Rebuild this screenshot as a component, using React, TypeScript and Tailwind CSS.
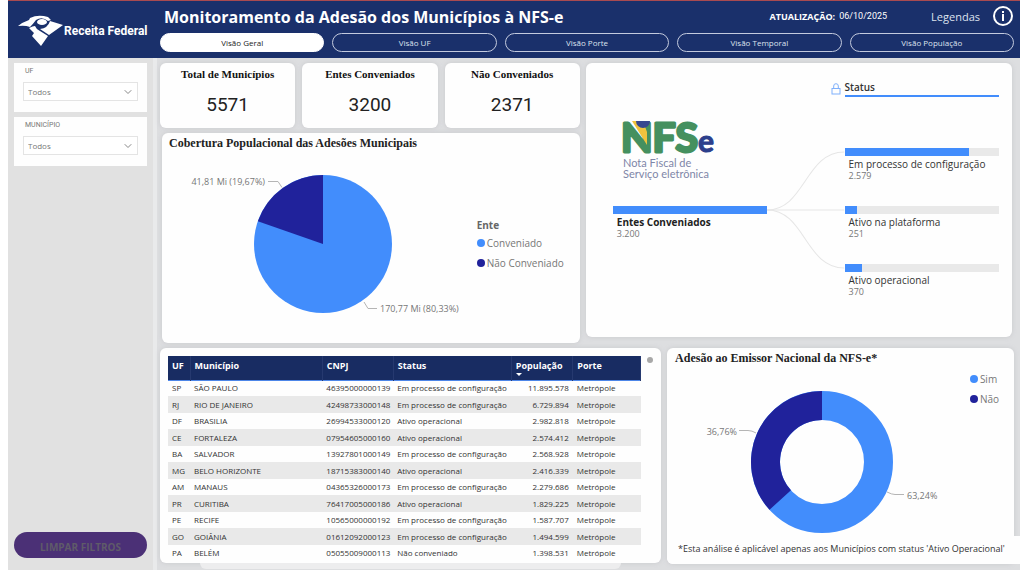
import { ChevronDown } from "lucide-react";

const TABS = ["Visão Geral", "Visão UF", "Visão Porte", "Visão Temporal", "Visão População"];

const KPIS = [
  { label: "Total de Municípios", value: "5571" },
  { label: "Entes Conveniados", value: "3200" },
  { label: "Não Conveniados", value: "2371" },
];

const TOTAL = 3200;

const STATUSES = [
  { label: "Em processo de configuração", value: 2579, text: "2.579" },
  { label: "Ativo na plataforma", value: 251, text: "251" },
  { label: "Ativo operacional", value: 370, text: "370" },
];

const CONFIG = "Em processo de configuração";
const ATIVO = "Ativo operacional";

const ROWS = [
  ["SP", "SÃO PAULO", "46395000000139", CONFIG, "11.895.578", "Metrópole"],
  ["RJ", "RIO DE JANEIRO", "42498733000148", CONFIG, "6.729.894", "Metrópole"],
  ["DF", "BRASILIA", "26994533000120", ATIVO, "2.982.818", "Metrópole"],
  ["CE", "FORTALEZA", "07954605000160", ATIVO, "2.574.412", "Metrópole"],
  ["BA", "SALVADOR", "13927801000149", CONFIG, "2.568.928", "Metrópole"],
  ["MG", "BELO HORIZONTE", "18715383000140", ATIVO, "2.416.339", "Metrópole"],
  ["AM", "MANAUS", "04365326000173", CONFIG, "2.279.686", "Metrópole"],
  ["PR", "CURITIBA", "76417005000186", ATIVO, "1.829.225", "Metrópole"],
  ["PE", "RECIFE", "10565000000192", CONFIG, "1.587.707", "Metrópole"],
  ["GO", "GOIÂNIA", "01612092000123", CONFIG, "1.494.599", "Metrópole"],
  ["PA", "BELÉM", "05055009000113", "Não conveniado", "1.398.531", "Metrópole"],
];

const COLUMNS = [
  { label: "UF", width: "w-[22px]" },
  { label: "Município", width: "w-[28%]" },
  { label: "CNPJ", width: "w-[15%]" },
  { label: "Status", width: "w-[25%]" },
  { label: "População", width: "w-[13%]" },
  { label: "Porte", width: "" },
];

const CARD = "bg-[#fefefe] rounded-md shadow-[0_0_5px_#c9cacd]";
const SERIF = "font-['Liberation_Serif',serif] font-bold";

// Point on a circle, with the fraction measured clockwise from the top
function point(cx: number, cy: number, r: number, fraction: number) {
  const angle = fraction * 2 * Math.PI;
  return `${cx + r * Math.sin(angle)} ${cy - r * Math.cos(angle)}`;
}

function ReceitaLogo() {
  return (
    <svg viewBox="0 0 134 34" className="h-[34px] w-[134px] shrink-0" role="img" aria-label="Receita Federal">
      <g fill="#fff">
        <path d="M0 13 Q5 9 11 7 L12 5 Q20 1 30 4 L33 7 L30 8 Q24 3 18 7 Q15 11 12 14 Q7 12 0 13Z" />
        <path d="M11 15 Q15 13 17 13 Q18 16 22 18 L30 23 L23 33 L14 23 L16 20Z" />
        <path d="M32 8 L45 12 L31 22 L22 16 Q30 15 32 8Z" />
        <ellipse cx="24" cy="9" rx="5" ry="3" />
      </g>
      <text x="46" y="22" fill="#fff" fontSize="12" className="font-[Roboto,sans-serif] font-bold">
        Receita Federal
      </text>
    </svg>
  );
}

function NfseLogo() {
  return (
    <svg viewBox="0 0 94 66" className="h-[66px] w-[94px] overflow-visible" role="img" aria-label="NFSe">
      <text
        x="-2"
        y="34"
        fontSize="41"
        fill="#45905f"
        stroke="#45905f"
        strokeWidth="3"
        strokeLinejoin="round"
        className="font-[Lato,sans-serif] font-bold"
      >
        NFS
        <tspan fontSize="30" fill="#2c3f8c" stroke="#2c3f8c" strokeWidth="1">e</tspan>
      </text>
      <path d="M9 3 H20 L24 14 V27 Z" fill="#efc33e" />
      <path d="M13 3 H27 A7 7 0 0 1 13 3Z" fill="#38478f" />
      <g fill="#7f86a8" fontSize="11" className="font-[Lato,sans-serif]">
        <text x="0" y="49">Nota Fiscal de</text>
        <text x="0" y="60">Serviço eletrônica</text>
      </g>
    </svg>
  );
}

function Filter({ id, label }: { id: string; label: string }) {
  return (
    <div className="flex h-[49px] flex-col bg-[#fefefe] px-[9px] pt-[3px]">
      <label htmlFor={id} className="ml-0.5 font-[Roboto,sans-serif] text-[7px] leading-[11px] text-[#777]">
        {label}
      </label>
      <div className="relative mt-[5px]">
        <select
          id={id}
          className="block h-[19px] w-full appearance-none border border-[#e4e4e4] bg-white px-1 text-[8px] text-[#777]"
        >
          <option>Todos</option>
        </select>
        <ChevronDown className="pointer-events-none absolute top-1 right-1 h-3 w-3 text-[#888]" strokeWidth={2} />
      </div>
    </div>
  );
}

function LegendItem({ color, label }: { color: string; label: string }) {
  return (
    <li className="flex h-5 items-center gap-[2px]">
      <span className={`h-2 w-2 rounded-full ${color}`} />
      {label}
    </li>
  );
}

function Header() {
  return (
    <header className="flex h-[58px] border-t border-[#a94a50] bg-[#1a306b]">
      <div className="flex w-[152px] shrink-0 items-center pl-2.5">
        <ReceitaLogo />
      </div>
      <div className="flex-1 pr-1.5">
        <div className="flex h-8 items-center justify-between pl-1 text-white">
          <h1 className="text-[16px] leading-8 font-bold">Monitoramento da Adesão dos Municípios à NFS-e</h1>
          <div className="flex items-center">
            <span className="text-[9px] font-bold">ATUALIZAÇÃO:</span>
            <span className="ml-1 font-[Roboto,sans-serif] text-[9px]">06/10/2025</span>
            <button type="button" className="ml-11 flex items-center gap-3 text-[11px] text-[#dde2ee]">
              Legendas
              <svg viewBox="0 0 22 22" className="h-[22px] w-[22px]" aria-hidden="true">
                <circle cx="11" cy="10" r="9" fill="none" stroke="#fff" strokeWidth="2" />
                <path d="M10 5h2v2h-2zM10 8h2v7h-2z" fill="#fff" />
              </svg>
            </button>
          </div>
        </div>
        <nav className="grid grid-cols-5 gap-2">
          {TABS.map((tab, index) => (
            <button
              key={tab}
              type="button"
              className={
                index === 0
                  ? "h-[19px] rounded-full border border-white bg-white text-[8px] text-[#222]"
                  : "h-[19px] rounded-full border border-[#c3cade] text-[8px] text-[#dde2ee]"
              }
            >
              {tab}
            </button>
          ))}
        </nav>
      </div>
    </header>
  );
}

function Coverage() {
  const split = point(161, 84, 69, 0.8033);

  return (
    <section className={`ml-0.5 h-[210px] ${CARD}`}>
      <h2 className={`pt-0.5 pl-[7px] text-[12px] leading-4 text-[#222] ${SERIF}`}>
        Cobertura Populacional das Adesões Municipais
      </h2>
      <div className="flex justify-between pt-[9px] pr-4">
        <svg viewBox="0 0 306 176" className="h-44 w-[306px]">
          <circle cx="161" cy="84" r="69" fill="#428dfc" />
          <path d={`M161 84 L161 15 A69 69 0 0 0 ${split} Z`} fill="#20229b" />
          <g fill="none" stroke="#b5b5b5">
            <path d="M106 21.5 h10 l4 6" />
            <path d="M202 142 l4 6.5 h9" />
          </g>
          <g fill="#777" fontSize="9">
            <text x="103" y="25" textAnchor="end">41,81 Mi (19,67%)</text>
            <text x="218" y="152">170,77 Mi (80,33%)</text>
          </g>
        </svg>
        <div className="pt-[58px] text-[10px] text-[#777]">
          <h3 className="font-bold text-[#666]">Ente</h3>
          <ul>
            <LegendItem color="bg-[#428dfc]" label="Conveniado" />
            <LegendItem color="bg-[#20229b]" label="Não Conveniado" />
          </ul>
        </div>
      </div>
    </section>
  );
}

function StatusTree() {
  return (
    <section className={`mr-0.5 h-[274px] pt-[17px] pr-[13px] pl-[27px] ${CARD}`}>
      <div className="grid grid-cols-[2fr_1fr_2fr]">
        <div />
        <div className="flex items-center justify-end pr-1">
          <svg viewBox="0 0 10 12" className="h-3 w-2.5" fill="none" stroke="#7fb0fb" aria-hidden="true">
            <rect x="1" y="5.5" width="8" height="5.5" />
            <path d="M2.7 5.5V3a2.3 2.3 0 0 1 4.6 0v2.5" />
          </svg>
        </div>
        <h2 className="border-b-2 border-[#428dfc] text-[10px] leading-[15px] font-semibold text-[#333]">Status</h2>
      </div>
      <div className="grid grid-cols-[2fr_1fr_2fr]">
        <div className="pt-[21px]">
          <div className="pl-2.5">
            <NfseLogo />
          </div>
          <div className="mt-[22px] h-2 bg-[#428dfc]" />
          <p className="mt-0.5 pl-1 text-[10px] leading-[13px] font-bold text-[#222]">Entes Conveniados</p>
          <p className="pl-1 text-[9px] leading-[9px] text-[#777]">3.200</p>
        </div>
        <svg viewBox="0 0 77 180" preserveAspectRatio="none" className="mt-[50px] h-[180px] w-full" aria-hidden="true">
          <g fill="none" stroke="#e6e6e6">
            <path d="M0 63 C38 63 38 5 77 5" />
            <path d="M0 63 H77" />
            <path d="M0 63 C38 63 38 121 77 121" />
          </g>
        </svg>
        <ul className="pt-[51px]">
          {STATUSES.map((status) => (
            <li key={status.label} className="h-[58px]">
              <div className="h-2 bg-[#e9e9e9]">
                <div className="h-2 bg-[#428dfc]" style={{ width: `${(status.value / TOTAL) * 100}%` }} />
              </div>
              <p className="mt-0.5 pl-1 text-[10px] leading-[13px] whitespace-nowrap text-[#333]">{status.label}</p>
              <p className="pl-1 text-[9px] leading-[9px] text-[#777]">{status.text}</p>
            </li>
          ))}
        </ul>
      </div>
    </section>
  );
}

function CityTable() {
  return (
    <div>
      <section className={`flex h-[215px] gap-1.5 py-2 pr-2 pl-2 ${CARD}`}>
        <div className="h-[201px] flex-1 overflow-hidden">
          <table className="w-full table-fixed text-left text-[8px] whitespace-nowrap text-[#333]">
            <thead>
              <tr className="h-6 border-b border-[#4d86e8] bg-[#182c62] text-[9px] text-white">
                {COLUMNS.map((column) => (
                  <th key={column.label} className={`relative border-r border-[#26396f] px-1 pb-1 font-bold ${column.width}`}>
                    {column.label}
                    {column.label === "População" && (
                      <span className="absolute bottom-1 left-1 border-x-[3px] border-t-[3px] border-x-transparent border-t-white" />
                    )}
                  </th>
                ))}
              </tr>
            </thead>
            <tbody>
              {ROWS.map((row) => (
                <tr key={row[0]} className="h-4 even:h-[17px] even:bg-[#e9e9e9]">
                  {row.map((cell, index) => (
                    <td key={index} className={index === 4 ? "px-1 text-right" : "px-1"}>
                      {cell}
                    </td>
                  ))}
                </tr>
              ))}
            </tbody>
          </table>
        </div>
        <span className="mt-px h-1.5 w-1.5 rounded-full bg-[#a8a8a8]" />
      </section>
      <div className="mr-10 ml-10 h-1.5 rounded-b-xl bg-[#ededee]" />
    </div>
  );
}

function Emitter() {
  const outer = point(155, 96, 71, 0.6324);
  const inner = point(155, 96, 42, 0.6324);

  return (
    <section className={`flex h-[216px] flex-col ${CARD}`}>
      <h2 className={`pt-0.5 pl-2 text-[12px] leading-4 text-[#222] ${SERIF}`}>Adesão ao Emissor Nacional da NFS-e*</h2>
      <div className="flex flex-1 justify-between pr-[15px]">
        <svg viewBox="0 0 290 170" className="h-[170px] w-[290px]">
          <circle cx="155" cy="96" r="56.5" fill="none" stroke="#428dfc" strokeWidth="29" />
          <path d={`M155 25 A71 71 0 0 0 ${outer} L${inner} A42 42 0 0 1 155 54 Z`} fill="#20229b" />
          <g fill="none" stroke="#b5b5b5">
            <path d="M72 64.5 h9 q4 0 8 2.5" />
            <path d="M220 126 q5 2.500 8 2.500 h9" />
          </g>
          <g fill="#777" fontSize="9">
            <text x="70" y="69" textAnchor="end">36,76%</text>
            <text x="240" y="133">63,24%</text>
          </g>
        </svg>
        <ul className="pt-[3px] text-[10px] text-[#777]">
          <LegendItem color="bg-[#428dfc]" label="Sim" />
          <LegendItem color="bg-[#20229b]" label="Não" />
        </ul>
      </div>
      <p className="-mr-1.5 h-7 rounded-bl-md bg-[#fefefe] pl-[11px] text-[9px] leading-[26px] whitespace-nowrap text-[#333]">
        *Esta análise é aplicável apenas aos Municípios com status 'Ativo Operacional'
      </p>
    </section>
  );
}

export default function App() {
  return (
    <div className="flex min-h-screen flex-col bg-white pr-1 pl-2 font-['Open_Sans',sans-serif]">
      <Header />
      <div className="flex flex-1 bg-[#dddee0]">
        <aside className="flex w-[145px] shrink-0 flex-col gap-[5px] bg-[#e1e1e1] px-1.5 pt-[5px] pb-3">
          <Filter id="uf" label="UF" />
          <Filter id="municipio" label="MUNICÍPIO" />
          <button
            type="button"
            className="mt-auto h-[26px] rounded-full bg-[#4b3076] pt-1 text-[10px] font-bold text-[#5f5b69]"
          >
            LIMPAR FILTROS
          </button>
        </aside>
        <main className="min-w-0 flex-1 border-l-4 border-[#e9eaeb] pt-[5px] pr-1.5 pl-[3px]">
          <div className="grid grid-cols-[50fr_51fr] gap-1.5">
            <div className="flex flex-col gap-[5px]">
              <div className="grid grid-cols-3 gap-[7px]">
                {KPIS.map((kpi) => (
                  <section key={kpi.label} className={`h-[65px] pt-1 text-center ${CARD}`}>
                    <h2 className={`text-[11px] leading-[14px] text-[#111] ${SERIF}`}>{kpi.label}</h2>
                    <p className="mt-3 font-[Roboto,sans-serif] text-[19px] leading-6 text-[#222]">{kpi.value}</p>
                  </section>
                ))}
              </div>
              <Coverage />
            </div>
            <StatusTree />
          </div>
          <div className="mt-[5px] grid grid-cols-[13fr_9fr] gap-1.5">
            <CityTable />
            <Emitter />
          </div>
        </main>
      </div>
    </div>
  );
}
